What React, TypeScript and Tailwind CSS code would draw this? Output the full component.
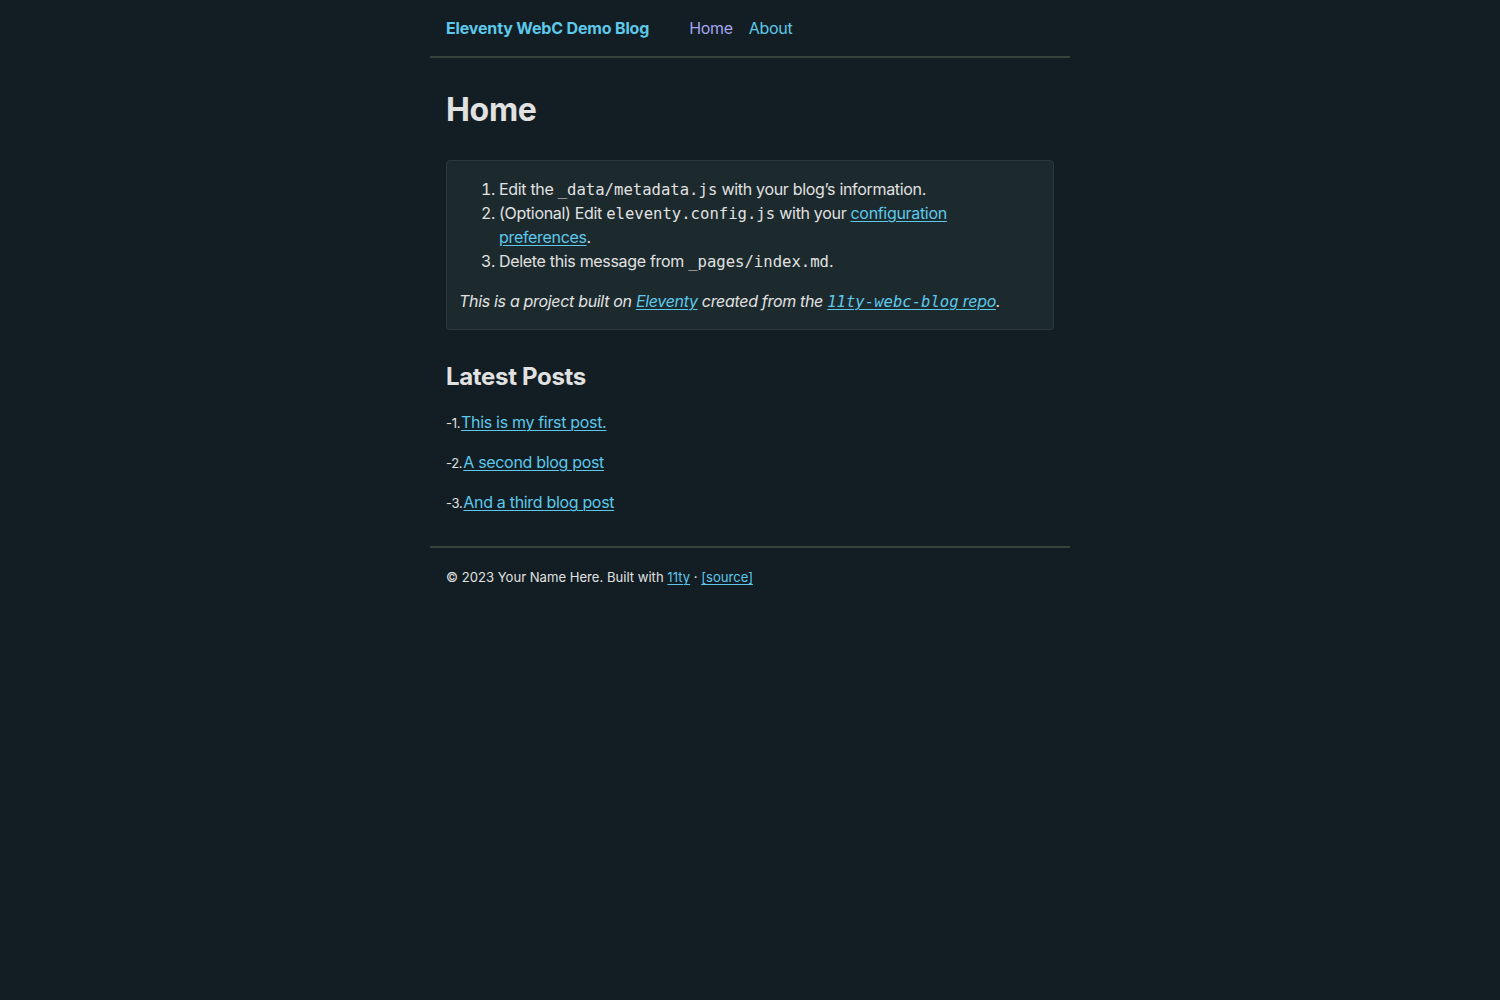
export default function App() {
  const posts = [
    { n: "-1.", title: "This is my first post." },
    { n: "-2.", title: "A second blog post" },
    { n: "-3.", title: "And a third blog post" },
  ]
  const mono = "font-['DejaVu_Sans_Mono',monospace] text-[15.6px] leading-none tracking-normal"
  const link = "text-[#5ec8ea] underline underline-offset-2 decoration-1"

  return (
    <div className="min-h-screen bg-[#121e23] text-[#e1e1e1] font-['Inter',sans-serif]">
      <div className="mx-auto w-[640px]">
        <header className="flex items-center h-[58px] px-4 border-b-2 border-[#38423f]">
          <a className="text-base font-bold text-[#5ec8ea] tracking-[-0.01em]">Eleventy WebC Demo Blog</a>
          <nav className="flex gap-4 ml-10 text-base tracking-[-0.02em]">
            <a className="text-[#a6a4ee]">Home</a>
            <a className="text-[#5ec8ea]">About</a>
          </nav>
        </header>

        <main className="px-4 tracking-[-0.02em]">
          <h1 className="text-[32px] font-bold text-[#e1e1e1] mt-[32px] mb-[30px] leading-[40px]">Home</h1>

          <div className="bg-[#1c2a2e] border border-[#2c393c] rounded-sm px-3 py-4 text-base leading-6">
            <ol className="list-decimal pl-10">
              <li>Edit the <code className={mono}>_data/metadata.js</code> with your blog’s information.</li>
              <li>(Optional) Edit <code className={mono}>eleventy.config.js</code> with your <a className={link}>configuration preferences</a>.</li>
              <li>Delete this message from <code className={mono}>_pages/index.md</code>.</li>
            </ol>
            <p className="italic mt-4">
              This is a project built on <a className={link}>Eleventy</a> created from the{" "}
              <a className={link}><code className={`${mono} italic`}>11ty-webc-blog</code> repo</a>.
            </p>
          </div>

          <h2 className="text-2xl font-bold mt-[31px] mb-[17px] leading-8">Latest Posts</h2>

          <div className="flex flex-col gap-4 pb-8">
            {posts.map((p) => (
              <div key={p.n} className="h-6 leading-6">
                <span className="text-[13px] leading-none">{p.n}</span>
                <a className={`${link} text-base ml-px`}>{p.title}</a>
              </div>
            ))}
          </div>
        </main>

        <footer className="border-t-2 border-[#38423f] px-4 pt-5 text-[13.1px]">
          © 2023 Your Name Here. Built with <a className={link}>11ty</a> · <a className={link}>[source]</a>
        </footer>
      </div>
    </div>
  )
}
